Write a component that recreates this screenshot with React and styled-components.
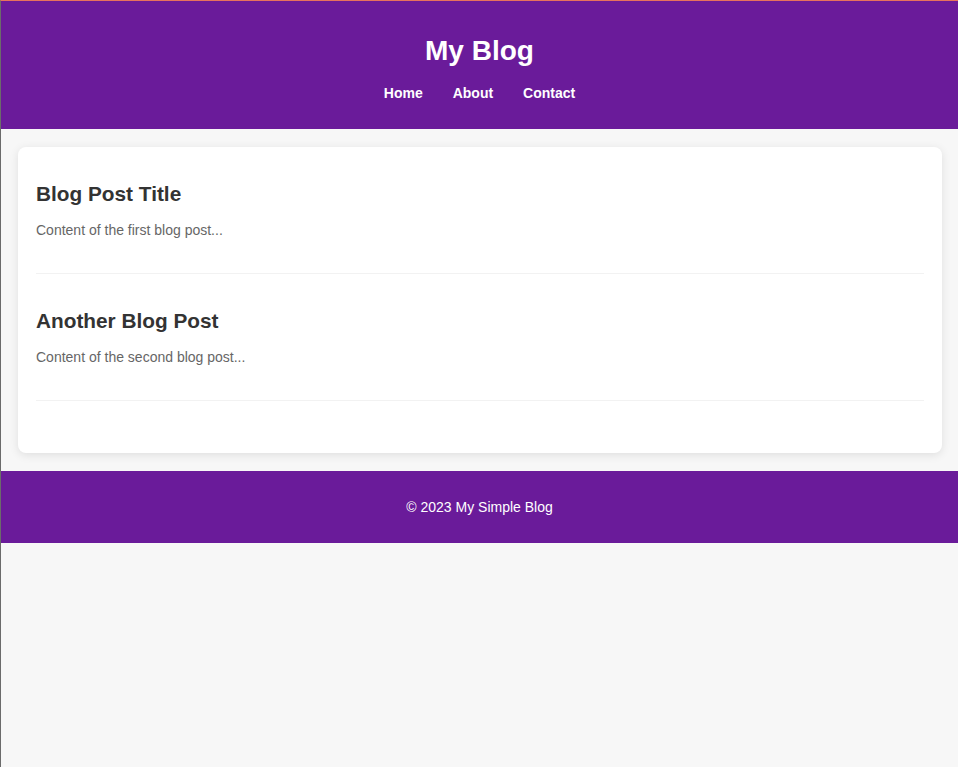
import styled, {createGlobalStyle} from "styled-components";

const GlobalStyle = createGlobalStyle`
  html, body {
    margin: 0;
    padding: 0;
    min-height: 100%;
    background-color: #f7f7f7;
    font-family: "Liberation Sans", Arial, sans-serif;
  }
  body {
    min-height: 100vh;
    box-sizing: border-box;
    border-top: 1px solid #e8735c;
    border-left: 1px solid #6b6b6b;
  }
`

const posts = [
    {id: 1, title: "Blog Post Title", body: "Content of the first blog post..."},
    {id: 2, title: "Another Blog Post", body: "Content of the second blog post..."},
]

const App = () => {
    return (
        <>
            <GlobalStyle/>
            <Header>
                <Title>My Blog</Title>
                <Nav>
                    <NavLink href="#">Home</NavLink>
                    <NavLink href="#">About</NavLink>
                    <NavLink href="#">Contact</NavLink>
                </Nav>
            </Header>
            <Main>
                <Card>
                    {posts.map(post => (
                        <Post key={post.id}>
                            <PostTitle>{post.title}</PostTitle>
                            <PostBody>{post.body}</PostBody>
                        </Post>
                    ))}
                </Card>
            </Main>
            <Footer>
                <FooterText>© 2023 My Simple Blog</FooterText>
            </Footer>
        </>
    )
}

const Header = styled.header`
  background-color: #6a1b9a;
  color: white;
  text-align: center;
  padding: 34px 0 28px;
`

const Title = styled.h1`
  margin: 0 0 18px;
  font-size: 28px;
  font-weight: bold;
`

const Nav = styled.nav`
  display: flex;
  justify-content: center;
  gap: 30px;
`

const NavLink = styled.a`
  color: white;
  text-decoration: none;
  font-size: 14px;
  font-weight: bold;
`

const Main = styled.main`
  padding: 18px 16px 18px 17px;
`

const Card = styled.div`
  display: flex;
  flex-direction: column;
  gap: 18px;
  background-color: white;
  border-radius: 8px;
  box-shadow: 0 2px 10px rgba(0, 0, 0, 0.1);
  padding: 17px 18px 52px;
`

const Post = styled.article`
  padding-bottom: 20px;
  border-bottom: 1px solid #f2f2f2;
`

const PostTitle = styled.h2`
  margin: 17.5px 0 16px;
  font-size: 20.8px;
  color: #333;
`

const PostBody = styled.p`
  margin: 0 0 15px;
  font-size: 14px;
  color: #666;
`

const Footer = styled.footer`
  background-color: #6a1b9a;
  color: white;
  text-align: center;
  padding: 28px 0;
`

const FooterText = styled.p`
  margin: 0;
  font-size: 14px;
`

export default App
